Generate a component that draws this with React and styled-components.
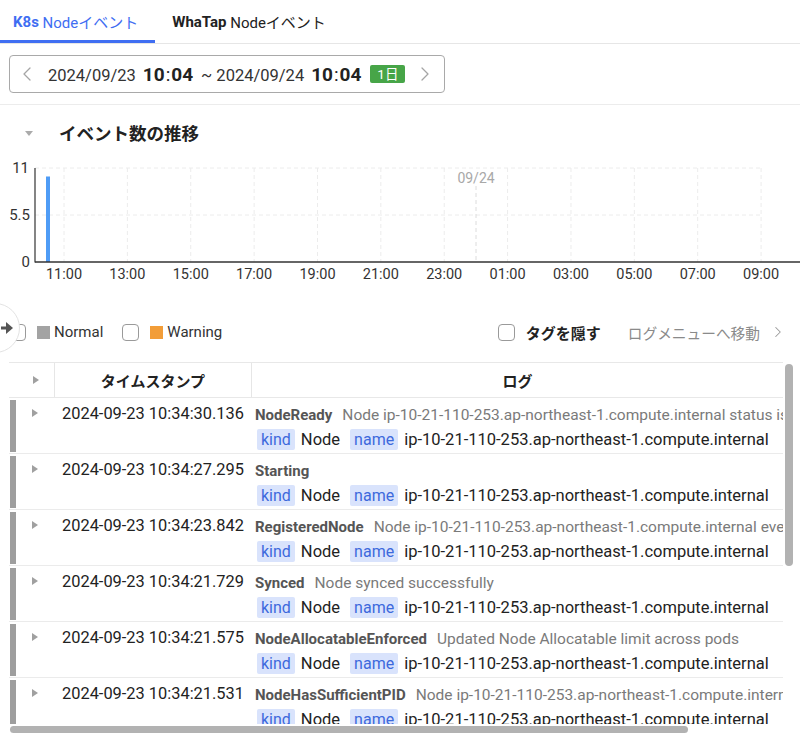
import React from "react";
import styled, { createGlobalStyle } from "styled-components";
import { ChevronLeft, ChevronRight } from "lucide-react";

const GlobalStyle = createGlobalStyle`
  html, body {
    margin: 0;
    padding: 0;
    background: #fff;
  }
  body {
    font-family: Roboto, "Noto Sans CJK JP", sans-serif;
    color: #222;
    overflow: hidden;
  }
`;

const NODE = "ip-10-21-110-253.ap-northeast-1.compute.internal";

const events = [
  {
    time: "2024-09-23 10:34:30.136",
    reason: "NodeReady",
    message: `Node ${NODE} status is now: NodeReady`,
  },
  { time: "2024-09-23 10:34:27.295", reason: "Starting", message: "" },
  {
    time: "2024-09-23 10:34:23.842",
    reason: "RegisteredNode",
    message: `Node ${NODE} event: Registered Node ${NODE} in Controller`,
  },
  {
    time: "2024-09-23 10:34:21.729",
    reason: "Synced",
    message: "Node synced successfully",
  },
  {
    time: "2024-09-23 10:34:21.575",
    reason: "NodeAllocatableEnforced",
    message: "Updated Node Allocatable limit across pods",
  },
  {
    time: "2024-09-23 10:34:21.531",
    reason: "NodeHasSufficientPID",
    message: `Node ${NODE} status is now: NodeHasSufficientPID`,
  },
];

const ticks = [
  "11:00", "13:00", "15:00", "17:00", "19:00", "21:00",
  "23:00", "01:00", "03:00", "05:00", "07:00", "09:00",
];

function EventChart() {
  const step = 63.37;
  return (
    <ChartSvg width="800" height="129" viewBox="0 0 800 129">
      {[8, 55].map((y) => (
        <line key={y} x1="35" x2="761" y1={y} y2={y} stroke="#ececec" strokeDasharray="4 3" />
      ))}
      {ticks.map((t, i) => (
        <line
          key={t}
          x1={64 + i * step}
          x2={64 + i * step}
          y1="8"
          y2="102"
          stroke="#ececec"
          strokeDasharray="4 3"
        />
      ))}
      <line x1="476" x2="476" y1="26" y2="102" stroke="#dcdcdc" strokeDasharray="4 3" />
      <text x="476" y="23" textAnchor="middle" fill="#a8a8a8" fontSize="14">
        09/24
      </text>
      <rect x="46" y="16.5" width="4" height="85.5" fill="#4f9cf6" />
      <line x1="35" x2="35" y1="8" y2="102.5" stroke="#333" strokeWidth="1.2" />
      <line x1="35" x2="800" y1="102" y2="102" stroke="#333" strokeWidth="1.5" />
      <text x="29" y="13" textAnchor="end" fill="#333" fontSize="15">11</text>
      <text x="30" y="60" textAnchor="end" fill="#333" fontSize="15">5.5</text>
      <text x="30" y="107" textAnchor="end" fill="#333" fontSize="15">0</text>
      {ticks.map((t, i) => (
        <text key={t} x={64 + i * step} y="119" textAnchor="middle" fill="#333" fontSize="14.5">
          {t}
        </text>
      ))}
    </ChartSvg>
  );
}

function App() {
  return (
    <Page>
      <GlobalStyle />
      <TabBar>
        <Tab $active>
          <b>K8s</b> Nodeイベント
        </Tab>
        <Tab>
          <b>WhaTap</b> Nodeイベント
        </Tab>
      </TabBar>

      <DateSection>
        <DateBox>
          <ChevronLeft size={24} strokeWidth={1.3} color="#a5a5a5" />
          <DateText>
            2024/09/23<Time>10<Colon>:</Colon>04</Time>~ 2024/09/24
            <Time>10<Colon>:</Colon>04</Time>
          </DateText>
          <RangeBadge>1日</RangeBadge>
          <ChevronRight size={24} strokeWidth={1.3} color="#a5a5a5" />
        </DateBox>
      </DateSection>

      <SectionHead>
        <CaretDown />
        <SectionTitle>イベント数の推移</SectionTitle>
      </SectionHead>

      <EventChart />

      <FilterRow>
        <SideToggle>
          <svg width="13" height="12" viewBox="0 0 13 12">
            <rect x="0" y="4.5" width="6" height="3" fill="#555" />
            <path d="M5 0 L12 6 L5 12 Z" fill="#555" />
          </svg>
        </SideToggle>
        <FilterGroup>
          <Check />
          <Swatch $color="#a3a3a3" />
          <Label>Normal</Label>
          <Check $gap />
          <Swatch $color="#f29d38" />
          <Label>Warning</Label>
        </FilterGroup>
        <FilterGroup>
          <Check />
          <StrongLabel>タグを隠す</StrongLabel>
          <LinkLabel>ログメニューへ移動</LinkLabel>
          <ChevronRight size={18} strokeWidth={1.4} color="#9a9a9a" />
        </FilterGroup>
      </FilterRow>

      <TableWrap>
        <HeaderRow>
          <HeadCell>
            <Caret />
          </HeadCell>
          <HeadCell>タイムスタンプ</HeadCell>
          <HeadCell>ログ</HeadCell>
        </HeaderRow>
        <Body>
          {events.map((e) => (
            <Row key={e.time}>
              <ExpandCell>
                <LevelBar />
                <Caret />
              </ExpandCell>
              <Stamp>{e.time}</Stamp>
              <LogCell>
                <LogLine>
                  <Reason>{e.reason}</Reason>
                  {e.message && <Message>{e.message}</Message>}
                </LogLine>
                <TagLine>
                  <Tag>kind</Tag>
                  <TagValue>Node</TagValue>
                  <Tag>name</Tag>
                  <TagValue>{NODE}</TagValue>
                </TagLine>
              </LogCell>
            </Row>
          ))}
        </Body>
        <HTrack>
          <HThumb />
        </HTrack>
        <VThumb />
      </TableWrap>
    </Page>
  );
}

const Page = styled.div`
  width: 800px;
  height: 743px;
  overflow: hidden;
`;

const TabBar = styled.div`
  display: flex;
  height: 43px;
  border-bottom: 1px solid #e6e6e6;
`;

const Tab = styled.div`
  display: flex;
  align-items: center;
  padding: 0 17px;
  font-size: 15px;
  color: ${(p) => (p.$active ? "#3f6ef2" : "#222")};
  box-shadow: ${(p) => (p.$active ? "inset 0 -3px 0 #3f6ef2" : "none")};
  white-space: pre;

  &:first-child {
    padding-left: 13px;
  }

  b {
    font-weight: 700;
  }
`;

const DateSection = styled.div`
  padding: 11px 9px 11px;
  border-bottom: 1px solid #ececec;
`;

const DateBox = styled.div`
  display: inline-flex;
  align-items: center;
  box-sizing: border-box;
  width: 436px;
  height: 38px;
  padding: 0 6px 0 5px;
  border: 1px solid #a9a9a9;
  border-radius: 4px;
`;

const DateText = styled.span`
  margin-left: 9px;
  font-size: 16.5px;
  color: #333;
  white-space: pre;
`;

const Time = styled.span`
  margin: 0 8px 0 7px;
  font-size: 19px;
  font-weight: 700;
  color: #222;
`;

const Colon = styled.span`
  font-weight: 400;
  margin: 0 1px;
`;

const RangeBadge = styled.span`
  flex-shrink: 0;
  margin: 0 8px 0 1px;
  width: 35px;
  height: 18px;
  line-height: 18px;
  text-align: center;
  background: #47a548;
  color: #fff;
  font-size: 13.5px;
  border-radius: 2px;
`;

const SectionHead = styled.div`
  display: flex;
  align-items: center;
  height: 55px;
  padding-left: 25px;
`;

const CaretDown = styled.span`
  width: 0;
  height: 0;
  border-left: 4.5px solid transparent;
  border-right: 4.5px solid transparent;
  border-top: 5px solid #ababab;
  margin-top: 1px;
`;

const SectionTitle = styled.h2`
  margin: 0 0 0 26px;
  font-size: 17.5px;
  font-weight: 700;
  color: #222;
`;

const ChartSvg = styled.svg`
  display: block;
  font-family: Roboto, sans-serif;
`;

const FilterRow = styled.div`
  position: relative;
  display: flex;
  justify-content: space-between;
  align-items: center;
  height: 20px;
  padding: 33px 13px 20px 9px;
`;

const SideToggle = styled.div`
  position: absolute;
  left: -30px;
  top: 14px;
  width: 50px;
  height: 50px;
  box-sizing: border-box;
  border: 1px solid #e3e3e3;
  border-radius: 50%;
  background: #fff;
  display: flex;
  align-items: center;
  justify-content: flex-end;
  padding-right: 5px;
  z-index: 2;
`;

const FilterGroup = styled.div`
  display: flex;
  align-items: center;
`;

const Check = styled.span`
  width: 17px;
  height: 17px;
  box-sizing: border-box;
  border: 1.5px solid #9a9a9a;
  border-radius: 4px;
  margin-left: ${(p) => (p.$gap ? "19px" : "0")};
  margin-right: 11px;
`;

const Swatch = styled.span`
  width: 13px;
  height: 13px;
  background: ${(p) => p.$color};
  margin-right: 4px;
`;

const Label = styled.span`
  font-size: 15px;
  color: #333;
`;

const StrongLabel = styled.span`
  font-size: 15px;
  font-weight: 700;
  color: #222;
`;

const LinkLabel = styled.span`
  margin: 0 9px 0 27px;
  font-size: 14.7px;
  color: #8a8a8a;
`;

const TableWrap = styled.div`
  position: relative;
  width: 786px;
  margin-left: 9px;
`;

const columns = "45px 197px 1fr";

const HeaderRow = styled.div`
  display: grid;
  grid-template-columns: ${columns};
  width: 774px;
  height: 34px;
  border-top: 1.5px solid #e8e8e8;
  border-bottom: 1.5px solid #e8e8e8;
`;

const HeadCell = styled.div`
  display: flex;
  align-items: center;
  justify-content: center;
  font-size: 15px;
  font-weight: 700;
  color: #222;
  & + & {
    border-left: 1px solid #e6e6e6;
  }
  &:first-child {
    padding-left: 8px;
  }
`;

const Caret = styled.span`
  width: 0;
  height: 0;
  border-top: 4.5px solid transparent;
  border-bottom: 4.5px solid transparent;
  border-left: 6px solid #a0a0a0;
`;

const Body = styled.div`
  width: 774px;
  height: 326px;
  overflow: hidden;
`;

const Row = styled.div`
  display: grid;
  grid-template-columns: ${columns};
  height: 55px;
  border-bottom: 1px solid #ebebeb;
`;

const ExpandCell = styled.div`
  position: relative;
  display: flex;
  justify-content: center;
  padding: 11px 0 0 7px;
`;

const LevelBar = styled.span`
  position: absolute;
  left: 1px;
  top: 2px;
  bottom: 1px;
  width: 6px;
  background: #9e9e9e;
`;

const Stamp = styled.div`
  padding: 6px 0 0 8px;
  font-size: 16.4px;
  color: #222;
  white-space: nowrap;
`;

const LogCell = styled.div`
  min-width: 0;
  padding: 7px 0 0 4px;
  overflow: hidden;
`;

const LogLine = styled.div`
  height: 20px;
  line-height: 20px;
  white-space: nowrap;
  overflow: hidden;
`;

const Reason = styled.span`
  font-size: 15px;
  font-weight: 700;
  color: #555;
`;

const Message = styled.span`
  margin-left: 10px;
  font-size: 15.5px;
  color: #7a7a7a;
`;

const TagLine = styled.div`
  display: flex;
  align-items: center;
  margin-top: 4px;
  padding-left: 2px;
  white-space: nowrap;
`;

const Tag = styled.span`
  height: 21px;
  line-height: 21px;
  padding: 0 4px;
  background: #d9e3fc;
  color: #3d69dc;
  font-size: 16px;
  border-radius: 2px;
`;

const TagValue = styled.span`
  margin: 0 10px 0 6px;
  font-size: 16.5px;
  color: #222;
`;

const HTrack = styled.div`
  width: 774px;
  height: 12px;
  padding-top: 2px;
  box-sizing: border-box;
`;

const HThumb = styled.div`
  margin-left: 1px;
  width: 678px;
  height: 7px;
  border-radius: 4px;
  background: #b2b2b2;
`;

const VThumb = styled.div`
  position: absolute;
  top: 2px;
  right: 2px;
  width: 8px;
  height: 202px;
  border-radius: 4px;
  background: #b2b2b2;
`;

export default App;
